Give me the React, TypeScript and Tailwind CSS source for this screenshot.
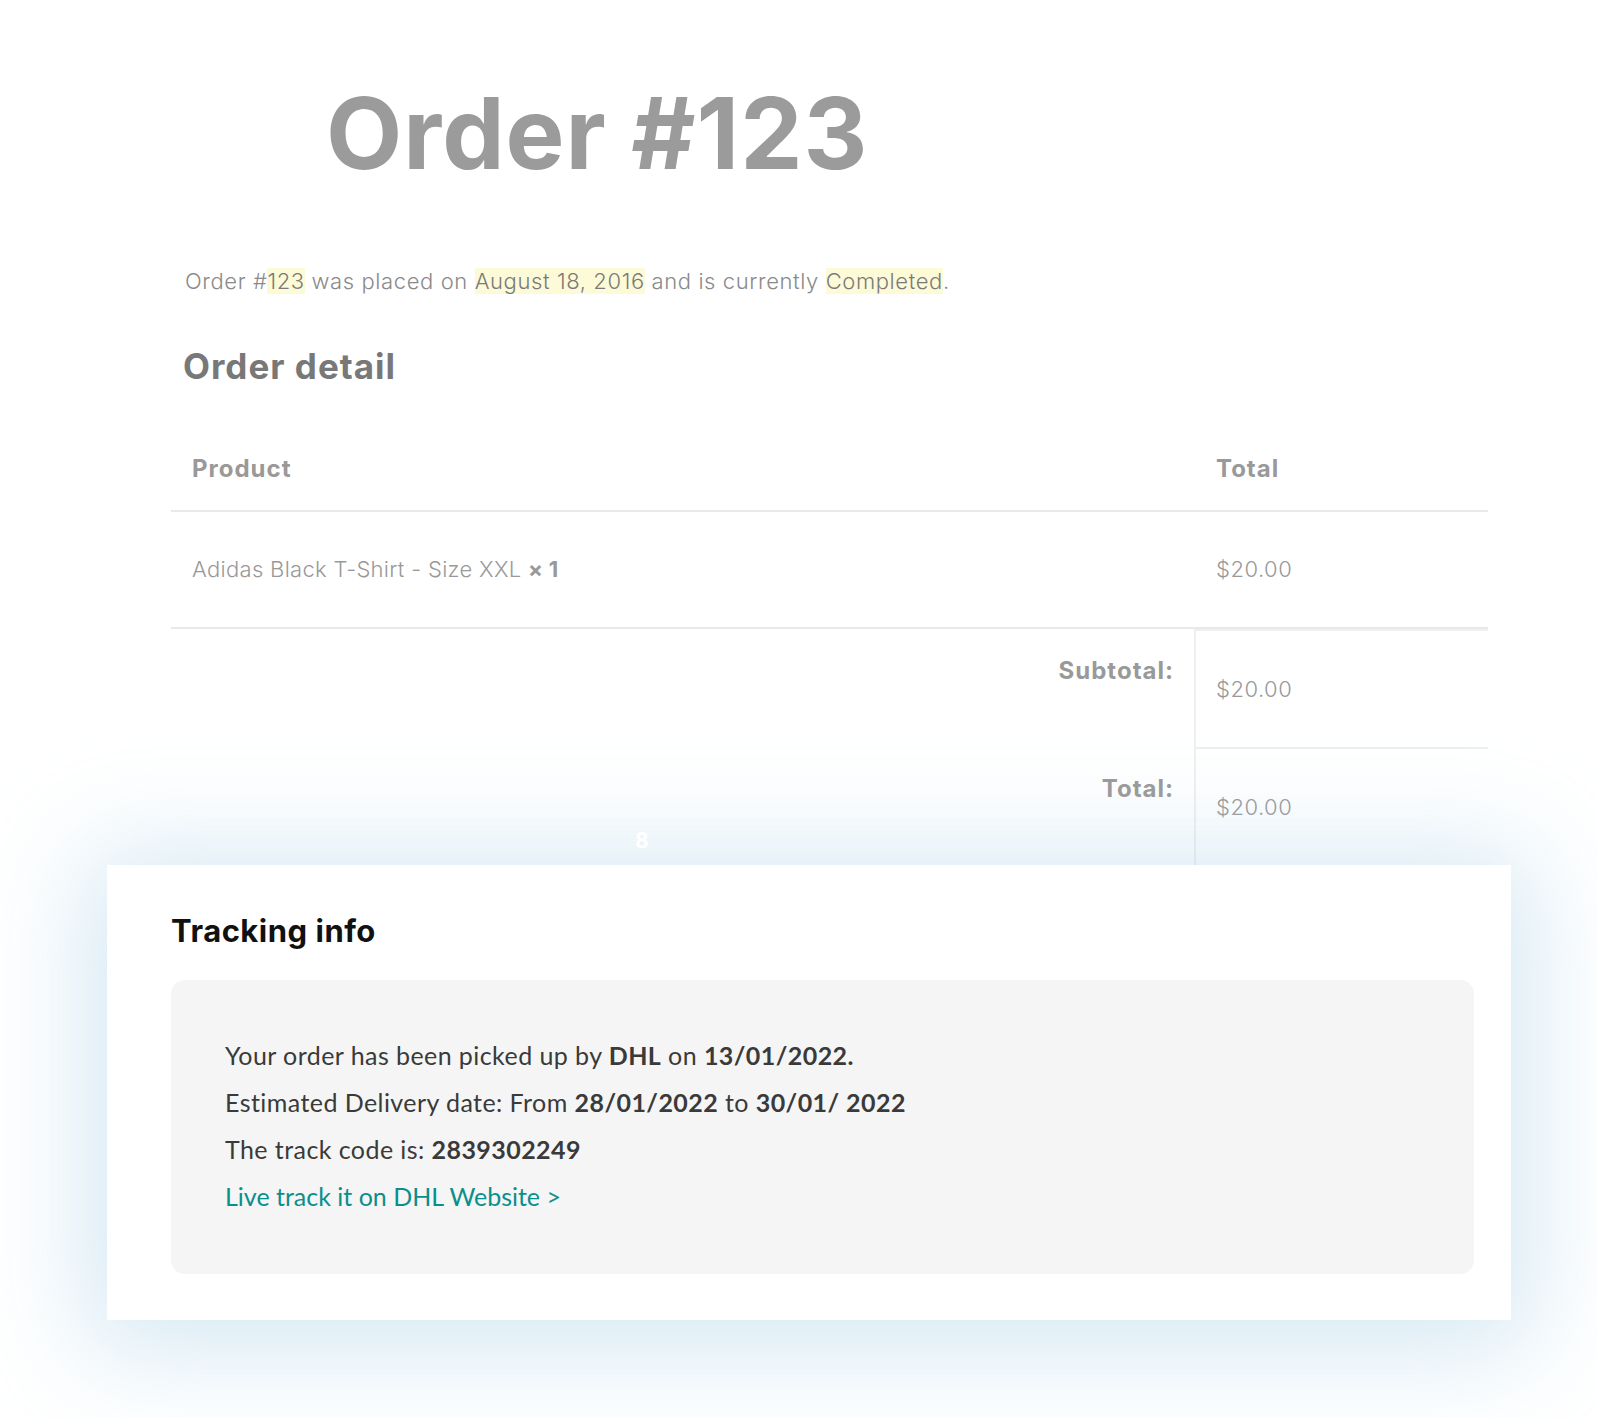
import React from "react";

const mont = { fontFamily: "Inter, 'Noto Sans', sans-serif" };
const av = { fontFamily: "Lato, 'Noto Sans', sans-serif" };

export default function App() {
  return (
    <div className="w-[1597px] min-h-[1418px] bg-white overflow-hidden" style={mont}>
      <div className="pt-[78px] pl-[326px]">
        <h1 className="text-[99px] leading-[110px] font-bold text-[#9b9b9b] tracking-[1px]">Order #123</h1>
      </div>
      <p className="mt-[78px] ml-[185px] text-[22px] leading-[30px] font-light text-[#8a8a8a] tracking-[0.6px]">
        Order #<span className="bg-[#fdfad8] text-[#7a7a7a]">123</span> was placed on{" "}
        <span className="bg-[#fdfad8] text-[#7a7a7a]">August 18, 2016</span> and is currently{" "}
        <span className="bg-[#fdfad8] text-[#7a7a7a]">Completed</span>.
      </p>
      <h2 className="mt-[50px] ml-[183px] text-[35px] leading-[40px] font-bold text-[#787878] tracking-[1px]">Order detail</h2>

      <div className="ml-[171px] mt-[42px] w-[1317px] text-[#999]">
        <div className="flex h-[84px] items-center border-b-2 border-[#e9e9e9] text-[24px] font-bold tracking-[1px]">
          <div className="w-[1023px] pl-[21px]">Product</div>
          <div className="pl-[22px]">Total</div>
        </div>
        <div className="flex h-[117px] items-center border-b-2 border-[#e9e9e9] text-[22px] font-light tracking-[0.3px]">
          <div className="w-[1023px] pl-[21px]">
            Adidas Black T-Shirt - Size XXL <span className="font-bold">× 1</span>
          </div>
          <div className="pl-[22px] tracking-[0.5px]">$20.00</div>
        </div>
        <div className="flex h-[118px]">
          <div className="w-[1023px] pr-[20px] pt-[24px] text-right text-[24px] font-bold tracking-[1px]">Subtotal:</div>
          <div className="flex-1 flex items-center border-l-2 border-t-2 border-[#efefef] pl-[20px] text-[22px] font-light tracking-[0.5px]">$20.00</div>
        </div>
        <div className="flex h-[118px]">
          <div className="w-[1023px] pr-[20px] pt-[24px] text-right text-[24px] font-bold tracking-[1px]">Total:</div>
          <div className="flex-1 flex items-center border-l-2 border-t-2 border-[#efefef] pl-[20px] text-[22px] font-light tracking-[0.5px]">$20.00</div>
        </div>
      </div>

      <div className="relative ml-[107px] w-[1404px] h-[455px] bg-white shadow-[0_10px_100px_20px_rgba(160,205,228,0.45)] pt-[46px] pl-[64px] pr-[37px]">
        <span className="absolute left-[528px] top-[-40px] text-[21px] font-bold text-white">8</span>
        <h3 className="text-[31px] leading-[40px] font-bold text-[#111] tracking-[0.5px]">Tracking info</h3>
        <div className="mt-[29px] h-[294px] rounded-[14px] bg-[#f5f5f5] pl-[54px] pt-[52px] text-[25px] leading-[47px] text-[#3a3a3a] tracking-[0.43px]" style={av}>
          <div>Your order has been picked up by <b>DHL</b> on <b>13/01/2022.</b></div>
          <div>Estimated Delivery date: From <b>28/01/2022</b> to <b>30/01/ 2022</b></div>
          <div>The track code is: <b>2839302249</b></div>
          <div className="text-[#0b8f8c] tracking-[0px]">Live track it on DHL Website &gt;</div>
        </div>
      </div>
    </div>
  );
}
